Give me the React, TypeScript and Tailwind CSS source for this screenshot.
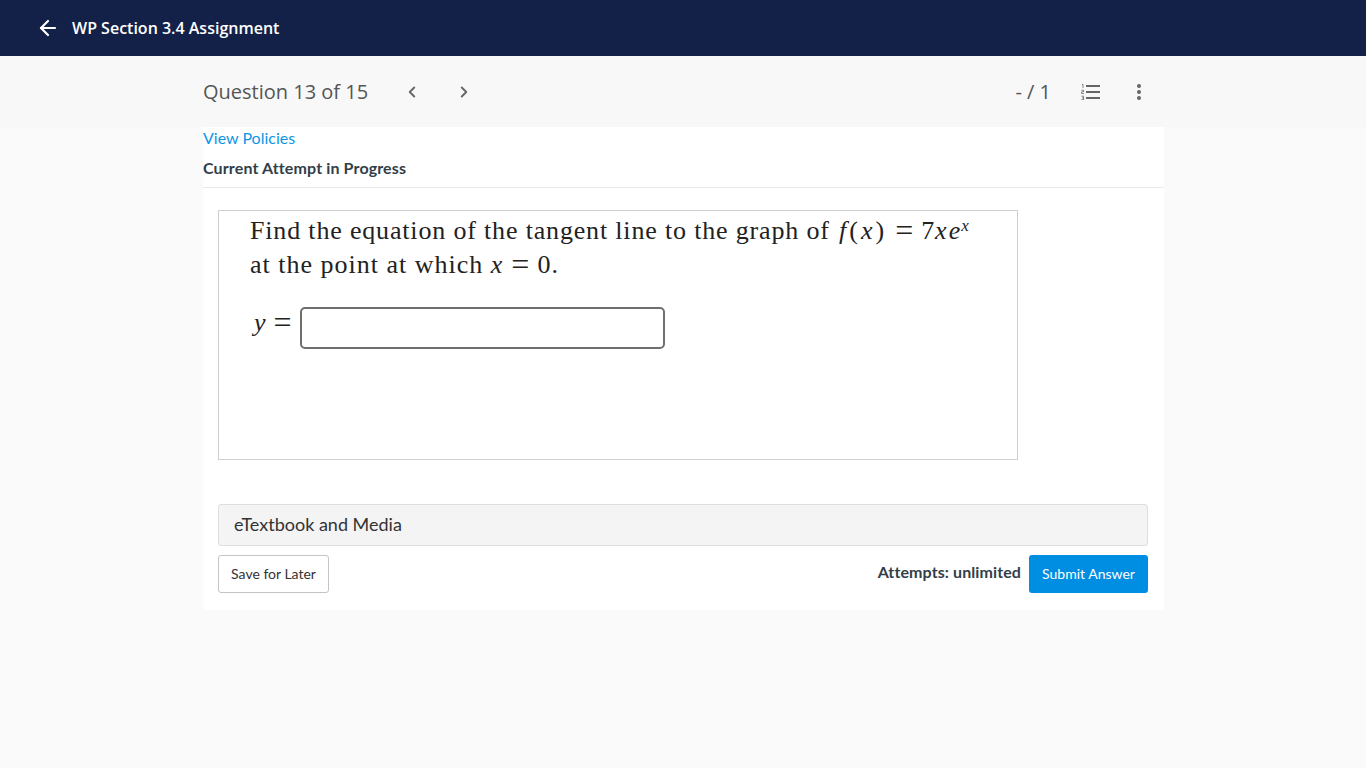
import React from 'react';
import { ArrowLeft, ChevronLeft, ChevronRight } from 'lucide-react';

const lato = 'font-["Lato",sans-serif]';
const openSans = 'font-["Open_Sans",sans-serif]';
const serif = 'font-["Liberation_Serif",serif]';

const ListIcon: React.FC = () => (
  <svg width="20" height="16" viewBox="0 0 20 16" className="text-[#666]">
    <path d="M5 2h14M5 8h14M5 14h14" stroke="currentColor" strokeWidth="1.8" fill="none" />
    <path d="M1 .8l1-.5v3.6M0.4 6.2h2.2v1.6H.6v1.7h2.2M0.4 12.2h2.2v3.4H.4M1 13.9h1.6" stroke="currentColor" strokeWidth="0.8" fill="none" />
  </svg>
);

const MoreIcon: React.FC = () => (
  <svg width="6" height="18" viewBox="0 0 6 18" className="text-[#666]">
    <circle cx="3" cy="3" r="2" fill="currentColor" />
    <circle cx="3" cy="9" r="2" fill="currentColor" />
    <circle cx="3" cy="15" r="2" fill="currentColor" />
  </svg>
);

const Eq: React.FC = () => <span className="mx-[8px] align-[-2px] text-[32px] leading-[0] tracking-normal">=</span>;

const QuestionImage: React.FC = () => (
  <div className={`w-[800px] h-[250px] border border-[#cfcfcf] bg-white pl-[31px] pt-[3px] text-[#222] ${serif}`}>
    <p className="h-[34px] text-[26px] leading-[34px] tracking-[0.83px] whitespace-nowrap">
      Find the equation of the tangent line to the graph of{' '}
      <span className="ml-[2px] tracking-[3px]">
        <i>f</i>(<i>x</i>)
      </span>
      <Eq />7<i className="tracking-[2px]">xe</i>
      <sup className="-ml-[1px] text-[17px] italic leading-none">x</sup>
    </p>
    <p className="h-[34px] text-[26px] leading-[34px] tracking-[1px] whitespace-nowrap">
      at the point at which <i>x</i>
      <Eq />0.
    </p>
    <div className="flex items-center mt-[24px]">
      <span className="w-[50px] pl-[4px] mb-[9px] text-[26px] leading-[34px] whitespace-nowrap">
        <i>y</i>
        <Eq />
      </span>
      <div className="w-[365px] h-[42px] border-2 border-[#6f6f6f] rounded-[5px] bg-white" />
    </div>
  </div>
);

export default function App() {
  return (
    <div className="min-h-[768px] bg-[#fafafa]">
      <header className="h-14 bg-[#132149] flex items-center pl-[36px] text-white">
        <ArrowLeft size={24} strokeWidth={2.2} />
        <span className={`ml-[12px] text-base font-semibold ${openSans}`}>WP Section 3.4 Assignment</span>
      </header>

      <div className="h-[71px] bg-[#f8f8f8]">
        <div className="ml-[203px] w-[961px] h-full flex items-center text-[#555]">
          <span className={`text-[20px] ${openSans}`}>Question 13 of 15</span>
          <ChevronLeft size={18} strokeWidth={2.5} className="ml-[35px] text-[#666]" />
          <ChevronRight size={18} strokeWidth={2.5} className="ml-[34px] text-[#666]" />
          <span className={`ml-auto text-[20px] ${openSans}`}>- / 1</span>
          <span className="ml-[30px]"><ListIcon /></span>
          <span className="ml-[35px] mr-[22px]"><MoreIcon /></span>
        </div>
      </div>

      <main className={`ml-[203px] w-[961px] h-[483px] bg-white ${lato}`}>
        <div className="h-[61px] border-b border-[#e8e9eb]">
          <a className="block h-[24px] text-base leading-[22px] text-[#0e96e6]">View Policies</a>
          <h2 className="mt-[5px] text-base leading-[24px] font-bold tracking-[0.13px] text-[#323e48]">Current Attempt in Progress</h2>
        </div>
        <div className="pl-[15px] pr-[16px] pt-[22px]">
          <QuestionImage />
          <div className="mt-[44px] h-[42px] flex items-center px-[15px] pb-[2px] bg-[#f4f4f4] border border-[#dedede] rounded-[3px] text-[18px] text-[#333]">
            eTextbook and Media
          </div>
          <div className="mt-[9px] flex items-center">
            <button className="w-[111px] h-[38px] bg-white border border-[#c4c4c4] rounded-[3px] text-sm text-[#333]">
              Save for Later
            </button>
            <span className="ml-auto mb-[4px] text-base font-bold tracking-[0.1px] text-[#323e48]">Attempts: unlimited</span>
            <button className="ml-[8px] w-[119px] h-[38px] bg-[#008ee2] rounded-[3px] text-sm text-white">
              Submit Answer
            </button>
          </div>
        </div>
      </main>
    </div>
  );
}
